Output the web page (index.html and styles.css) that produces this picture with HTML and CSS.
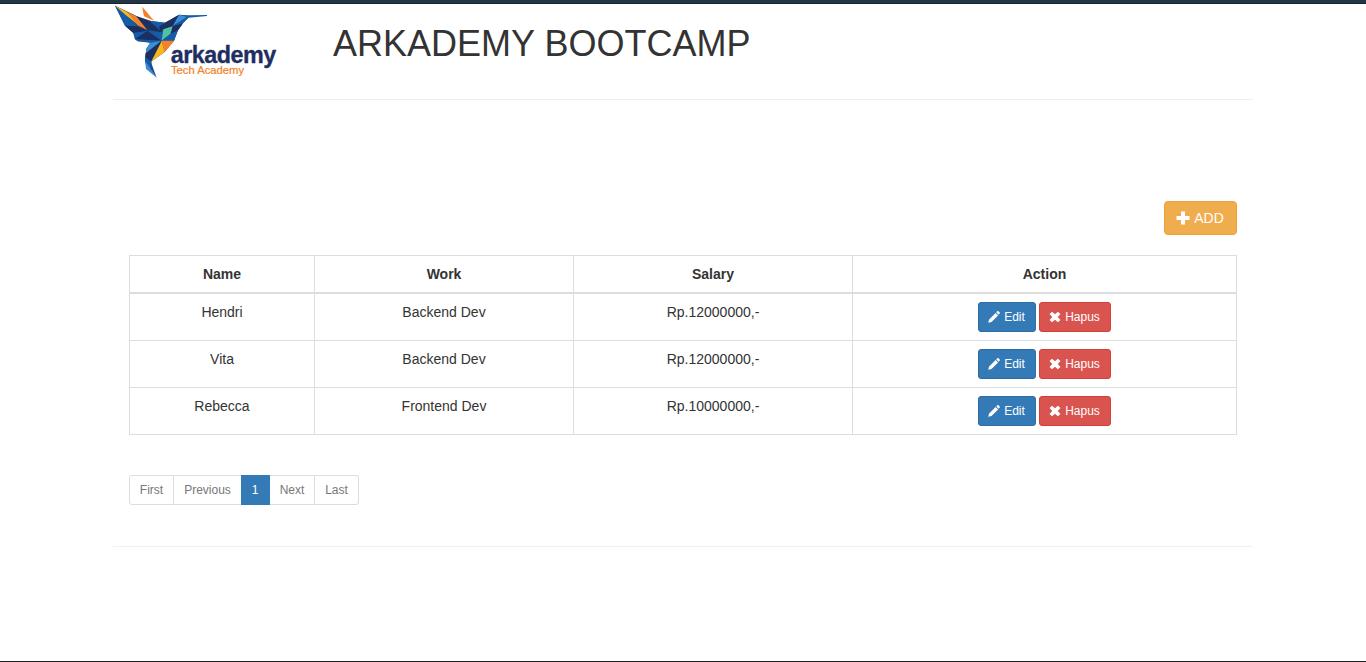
FILE: index.html
```html
<!DOCTYPE html>
<html lang="id">
<head>
<meta charset="utf-8">
<title>Arkademy Bootcamp</title>
<link rel="stylesheet" href="styles.css">
</head>
<body>
<svg class="symbols" aria-hidden="true">
  <symbol id="plus" viewBox="0 0 14 14"><path d="M5 .5h4V5h4.500v4H9v4.500H5V9H.5V5H5z"/></symbol>
  <symbol id="pencil" viewBox="0 0 12 12"><path d="M9.300.2q.6-.5 1.100 0l1.300 1.300q.5.500 0 1.100L10.600 3.700 8.200 1.300zM7.600 1.900l2.500 2.500-6.600 6.500L.2 11.800l.9-3.300z"/></symbol>
  <symbol id="remove" viewBox="0 0 12 12"><path d="M3.100.8L6 3.300 8.900.8 11.500 3.100 8.700 6l2.800 2.900-2.600 2.300L6 8.700l-2.900 2.500L.5 8.900 3.300 6 .5 3.100z"/></symbol>
</svg>
<div class="topbar"></div>
<header class="header">
  <svg class="logo" viewBox="24 12 510 234" role="img" aria-label="arkademy Tech Academy">
    <path fill="#174d8f" d="M30 17L96 49 139 63 180 68 222 44 250 48 234 70 219 91 207 122 179 156 138 185 120 178 124 146 138 127 98 124 90 118 85 99 60 77z"/>
    <path fill="#155ca7" d="M30 17L62 44 99 79 60 77z"/>
    <path fill="#f9b61c" d="M30 17L66 35 108 82 62 45z"/>
    <path fill="#155ca7" d="M30 17L96 50 66 36z"/>
    <path fill="#f58026" d="M66 35L96 50 128 91 98 76z"/>
    <path fill="#f58026" d="M111 20L122 32 147 62 117 49z"/>
    <path fill="#1d2f60" d="M94 49L139 65 128 91zM60 77L98 79 128 92 85 99z"/>
    <path fill="#155ca7" d="M85 99L128 92 90 118z"/>
    <path fill="#1d2f60" d="M128 92L170 122 90 118z"/>
    <path fill="#155ca7" d="M90 118L170 122 138 129 100 124z"/>
    <path fill="#155ca7" d="M138 63L180 68 170 122 128 92z"/>
    <path fill="#1d2f60" d="M136 65L172 97 128 91zM180 68L222 44 204 79 175 88 168 97 162 80z"/>
    <path fill="#3c8dd2" d="M222 44L250 49 203 79z"/>
    <path fill="#155ca7" d="M222 44L250 46 306 45 306 48 251 53 234 70 203 79 245 51z"/>
    <path fill="#1d2f60" d="M203 79L234 70 218 92 197 102z"/>
    <path fill="#51c1a4" d="M175 88L203 79 196 102 170 122z"/>
    <path fill="#155ca7" d="M196 102L219 91 207 122 170 122z"/>
    <path fill="#f58026" d="M170 122L208 122 179 156z"/>
    <path fill="#f9b61c" d="M170 122L179 156 138 185z"/>
    <path fill="#3c8dd2" d="M170 122L134 129 124 146 122 162z"/>
    <path fill="#1d2f60" d="M170 122L138 185 120 175 122 160z"/>
    <path fill="#155ca7" d="M120 170L140 185 137 211 120 188z"/>
    <path fill="#3c8dd2" d="M120 182L138 208 155 233 123 207z"/>
    <path fill="#174d8f" d="M138 187L137 208 155 233z"/>
    <text class="brand" x="197" y="189" textLength="317" lengthAdjust="spacing">arkademy</text>
    <text class="tagline" x="198" y="222" textLength="219" lengthAdjust="spacingAndGlyphs">Tech Academy</text>
  </svg>
  <h1>ARKADEMY BOOTCAMP</h1>
</header>
<main class="content">
  <div class="toolbar"><button class="btn add"><svg><use href="#plus"/></svg>ADD</button></div>
  <table>
    <colgroup><col class="c-name"><col class="c-work"><col class="c-salary"><col class="c-action"></colgroup>
    <thead><tr><th>Name</th><th>Work</th><th>Salary</th><th>Action</th></tr></thead>
    <tbody>
      <tr><td>Hendri</td><td>Backend Dev</td><td>Rp.12000000,-</td><td><div class="actions"><button class="btn edit"><svg><use href="#pencil"/></svg>Edit</button><button class="btn delete"><svg><use href="#remove"/></svg>Hapus</button></div></td></tr>
      <tr><td>Vita</td><td>Backend Dev</td><td>Rp.12000000,-</td><td><div class="actions"><button class="btn edit"><svg><use href="#pencil"/></svg>Edit</button><button class="btn delete"><svg><use href="#remove"/></svg>Hapus</button></div></td></tr>
      <tr><td>Rebecca</td><td>Frontend Dev</td><td>Rp.10000000,-</td><td><div class="actions"><button class="btn edit"><svg><use href="#pencil"/></svg>Edit</button><button class="btn delete"><svg><use href="#remove"/></svg>Hapus</button></div></td></tr>
    </tbody>
  </table>
  <nav class="pages"><a class="p-first">First</a><a class="p-prev">Previous</a><a class="p-current">1</a><a class="p-next">Next</a><a class="p-last">Last</a></nav>
</main>
<div class="bottombar"></div>
</body>
</html>
```
FILE: styles.css
```css
* { box-sizing: border-box; }
body {
  margin: 0;
  height: 662px;
  display: flex;
  flex-direction: column;
  overflow: hidden;
  background: #fff;
  color: #333;
  font: 14px/20px "Liberation Sans", Arial, sans-serif;
}
.symbols { display: none; }
.topbar { height: 4px; background: #213547; border-bottom: 1px solid #14222e; }
.header {
  display: flex;
  width: 1140px;
  height: 96px;
  margin-left: 113px;
  border-bottom: 1px solid #eee;
}
.logo { width: 170px; height: 78px; overflow: visible; }
.brand { font: bold 70px "Liberation Sans", Arial, sans-serif; fill: #1d2f60; stroke: #1d2f60; stroke-width: 1px; }
.tagline { font: 32px "Liberation Sans", Arial, sans-serif; fill: #f58026; stroke: #f58026; stroke-width: .6px; }
h1 { margin: 20px 0 0 50px; font-size: 36px; font-weight: 400; line-height: 40px; }
.content {
  width: 1140px;
  height: 447px;
  margin-left: 113px;
  padding: 101px 16px 0;
  border-bottom: 1px solid #f1f1f1;
}
.toolbar { display: flex; justify-content: flex-end; margin-bottom: 20px; }
.btn {
  display: flex;
  align-items: center;
  justify-content: center;
  padding: 0;
  border: 1px solid;
  border-radius: 3px;
  color: #fff;
  font: 12px/18px "Liberation Sans", Arial, sans-serif;
}
.btn svg { width: 12px; height: 12px; margin-right: 4px; fill: #fff; }
.add { width: 73px; height: 34px; border-radius: 4px; border-color: #eea236; background: #f0ad4e; font-size: 14px; }
.btn.add svg { width: 14px; height: 14px; margin: -1px 4px 0 -1px; }
.edit { width: 58px; height: 30px; border-color: #2e6da4; background: #337ab7; }
.delete { width: 72px; height: 30px; border-color: #d43f3a; background: #d9534f; }
.edit svg, .delete svg { width: 12px; margin: -1px 4px 0 -1px; }
.actions { display: flex; justify-content: center; gap: 3px; }
table { width: 1108px; table-layout: fixed; border-collapse: separate; border-spacing: 0; border: 1px solid #ddd; border-width: 1px 0 0 1px; }
.c-name { width: 185px; }
.c-work { width: 259px; }
.c-salary { width: 279px; }
.c-action { width: 384px; }
th, td { border: 1px solid #ddd; border-width: 0 1px 1px 0; padding: 8px; text-align: center; vertical-align: top; }
th { height: 38px; border-bottom-width: 2px; }
td { height: 47px; }
.pages { display: flex; margin-top: 40px; color: #777; font-size: 12px; line-height: 28px; text-align: center; }
.pages a { height: 30px; border: 1px solid #ddd; border-left: 0; }
.pages .p-first { width: 45px; border-left: 1px solid #ddd; border-radius: 3px 0 0 3px; }
.pages .p-prev { width: 67px; border-right: 0; }
.pages .p-current { width: 29px; border-color: #337ab7; background: #337ab7; color: #fff; }
.p-next { width: 45px; }
.p-last { width: 44px; }
.pages .p-last { border-radius: 0 3px 3px 0; }
.bottombar { height: 1px; margin-top: auto; background: #202020; }
```
